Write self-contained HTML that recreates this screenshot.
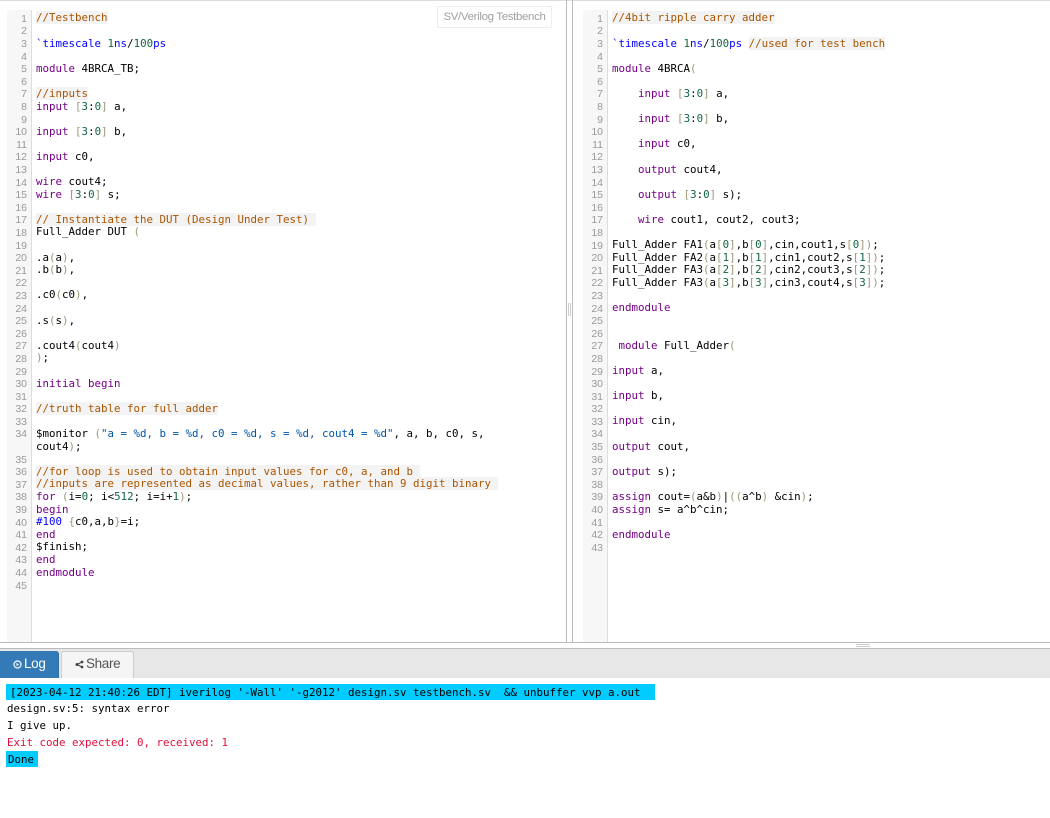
<!DOCTYPE html>
<html><head><meta charset="utf-8">
<style>
html,body{margin:0;padding:0;background:#fff;width:1050px;height:818px;overflow:hidden}
body{position:relative;font-family:"DejaVu Sans Mono","Liberation Mono",monospace;font-size:10.8px;color:#000}
.abs{position:absolute}
.gut{position:absolute;top:10px;width:24px;height:632px;background:#f7f7f7;border-right:1px solid #ddd}
.code{position:absolute;top:12.4px;line-height:12.6px}
.r{height:12.6px;position:relative;white-space:pre}
.r i{position:absolute;left:-36px;top:.5px;width:27px;text-align:right;font:10.5px/12.6px "Liberation Sans",sans-serif;color:#999}
.c{color:#a50;background:#f3f3f3}
.k{color:#708}
.n{color:#164}
.b{color:#997}
.m{color:#00f}
.s{color:#05a}
.log{position:absolute;left:7px;white-space:pre;line-height:17px}
</style></head>
<body>
<div class="abs" style="left:0;top:0;width:1050px;height:1px;background:#ddd"></div>
<div class="abs" style="left:566px;top:0;width:1px;height:642px;background:#bbb"></div>
<div class="abs" style="left:572px;top:0;width:1px;height:642px;background:#bbb"></div>
<div class="abs" style="left:568px;top:303px;width:1px;height:13px;background:#ccc"></div>
<div class="abs" style="left:570px;top:303px;width:1px;height:13px;background:#ccc"></div>
<div class="gut" style="left:7px"></div>
<div class="gut" style="left:583px"></div>

<div class="abs" style="left:437px;top:6px;width:113px;height:20px;border:1px solid #eee;font:11.4px/20px 'Liberation Sans',sans-serif;letter-spacing:-.3px;color:#a0a0a0;text-align:center">SV/Verilog Testbench</div>

<div class="code" style="left:36px">
<div class="r"><i>1</i><span class="c">//Testbench</span></div>
<div class="r"><i>2</i> </div>
<div class="r"><i>3</i><span class="m">`timescale</span> <span class="n">1</span><span class="m">ns</span>/<span class="n">100</span><span class="m">ps</span></div>
<div class="r"><i>4</i> </div>
<div class="r"><i>5</i><span class="k">module</span> 4BRCA_TB;</div>
<div class="r"><i>6</i> </div>
<div class="r"><i>7</i><span class="c">//inputs</span></div>
<div class="r"><i>8</i><span class="k">input</span> <span class="b">[</span><span class="n">3</span>:<span class="n">0</span><span class="b">]</span> a,</div>
<div class="r"><i>9</i> </div>
<div class="r"><i>10</i><span class="k">input</span> <span class="b">[</span><span class="n">3</span>:<span class="n">0</span><span class="b">]</span> b,</div>
<div class="r"><i>11</i> </div>
<div class="r"><i>12</i><span class="k">input</span> c0,</div>
<div class="r"><i>13</i> </div>
<div class="r"><i>14</i><span class="k">wire</span> cout4;</div>
<div class="r"><i>15</i><span class="k">wire</span> <span class="b">[</span><span class="n">3</span>:<span class="n">0</span><span class="b">]</span> s;</div>
<div class="r"><i>16</i> </div>
<div class="r"><i>17</i><span class="c">// Instantiate the DUT (Design Under Test) </span></div>
<div class="r"><i>18</i>Full_Adder DUT <span class="b">(</span></div>
<div class="r"><i>19</i> </div>
<div class="r"><i>20</i>.a<span class="b">(</span>a<span class="b">)</span>,</div>
<div class="r"><i>21</i>.b<span class="b">(</span>b<span class="b">)</span>,</div>
<div class="r"><i>22</i> </div>
<div class="r"><i>23</i>.c0<span class="b">(</span>c0<span class="b">)</span>,</div>
<div class="r"><i>24</i> </div>
<div class="r"><i>25</i>.s<span class="b">(</span>s<span class="b">)</span>,</div>
<div class="r"><i>26</i> </div>
<div class="r"><i>27</i>.cout4<span class="b">(</span>cout4<span class="b">)</span></div>
<div class="r"><i>28</i><span class="b">)</span>;</div>
<div class="r"><i>29</i> </div>
<div class="r"><i>30</i><span class="k">initial begin</span></div>
<div class="r"><i>31</i> </div>
<div class="r"><i>32</i><span class="c">//truth table for full adder</span></div>
<div class="r"><i>33</i> </div>
<div class="r"><i>34</i>$monitor <span class="b">(</span><span class="s">"a = %d, b = %d, c0 = %d, s = %d, cout4 = %d"</span>, a, b, c0, s,</div>
<div class="r">cout4<span class="b">)</span>;</div>
<div class="r"><i>35</i> </div>
<div class="r"><i>36</i><span class="c">//for loop is used to obtain input values for c0, a, and b </span></div>
<div class="r"><i>37</i><span class="c">//inputs are represented as decimal values, rather than 9 digit binary </span></div>
<div class="r"><i>38</i><span class="k">for</span> <span class="b">(</span>i=<span class="n">0</span>; i&lt;<span class="n">512</span>; i=i+<span class="n">1</span><span class="b">)</span>;</div>
<div class="r"><i>39</i><span class="k">begin</span></div>
<div class="r"><i>40</i><span class="m">#100</span> <span class="b">{</span>c0,a,b<span class="b">}</span>=i;</div>
<div class="r"><i>41</i><span class="k">end</span></div>
<div class="r"><i>42</i>$finish;</div>
<div class="r"><i>43</i><span class="k">end</span></div>
<div class="r"><i>44</i><span class="k">endmodule</span></div>
<div class="r"><i>45</i> </div>
</div>

<div class="code" style="left:612px">
<div class="r"><i>1</i><span class="c">//4bit ripple carry adder</span></div>
<div class="r"><i>2</i> </div>
<div class="r"><i>3</i><span class="m">`timescale</span> <span class="n">1</span><span class="m">ns</span>/<span class="n">100</span><span class="m">ps</span> <span class="c">//used for test bench</span></div>
<div class="r"><i>4</i> </div>
<div class="r"><i>5</i><span class="k">module</span> 4BRCA<span class="b">(</span></div>
<div class="r"><i>6</i> </div>
<div class="r"><i>7</i>    <span class="k">input</span> <span class="b">[</span><span class="n">3</span>:<span class="n">0</span><span class="b">]</span> a,</div>
<div class="r"><i>8</i> </div>
<div class="r"><i>9</i>    <span class="k">input</span> <span class="b">[</span><span class="n">3</span>:<span class="n">0</span><span class="b">]</span> b,</div>
<div class="r"><i>10</i> </div>
<div class="r"><i>11</i>    <span class="k">input</span> c0,</div>
<div class="r"><i>12</i> </div>
<div class="r"><i>13</i>    <span class="k">output</span> cout4,</div>
<div class="r"><i>14</i> </div>
<div class="r"><i>15</i>    <span class="k">output</span> <span class="b">[</span><span class="n">3</span>:<span class="n">0</span><span class="b">]</span> s);</div>
<div class="r"><i>16</i> </div>
<div class="r"><i>17</i>    <span class="k">wire</span> cout1, cout2, cout3;</div>
<div class="r"><i>18</i> </div>
<div class="r"><i>19</i>Full_Adder FA1<span class="b">(</span>a<span class="b">[</span><span class="n">0</span><span class="b">]</span>,b<span class="b">[</span><span class="n">0</span><span class="b">]</span>,cin,cout1,s<span class="b">[</span><span class="n">0</span><span class="b">])</span>;</div>
<div class="r"><i>20</i>Full_Adder FA2<span class="b">(</span>a<span class="b">[</span><span class="n">1</span><span class="b">]</span>,b<span class="b">[</span><span class="n">1</span><span class="b">]</span>,cin1,cout2,s<span class="b">[</span><span class="n">1</span><span class="b">])</span>;</div>
<div class="r"><i>21</i>Full_Adder FA3<span class="b">(</span>a<span class="b">[</span><span class="n">2</span><span class="b">]</span>,b<span class="b">[</span><span class="n">2</span><span class="b">]</span>,cin2,cout3,s<span class="b">[</span><span class="n">2</span><span class="b">])</span>;</div>
<div class="r"><i>22</i>Full_Adder FA3<span class="b">(</span>a<span class="b">[</span><span class="n">3</span><span class="b">]</span>,b<span class="b">[</span><span class="n">3</span><span class="b">]</span>,cin3,cout4,s<span class="b">[</span><span class="n">3</span><span class="b">])</span>;</div>
<div class="r"><i>23</i> </div>
<div class="r"><i>24</i><span class="k">endmodule</span></div>
<div class="r"><i>25</i> </div>
<div class="r"><i>26</i> </div>
<div class="r"><i>27</i> <span class="k">module</span> Full_Adder<span class="b">(</span></div>
<div class="r"><i>28</i> </div>
<div class="r"><i>29</i><span class="k">input</span> a,</div>
<div class="r"><i>30</i> </div>
<div class="r"><i>31</i><span class="k">input</span> b,</div>
<div class="r"><i>32</i> </div>
<div class="r"><i>33</i><span class="k">input</span> cin,</div>
<div class="r"><i>34</i> </div>
<div class="r"><i>35</i><span class="k">output</span> cout,</div>
<div class="r"><i>36</i> </div>
<div class="r"><i>37</i><span class="k">output</span> s);</div>
<div class="r"><i>38</i> </div>
<div class="r"><i>39</i><span class="k">assign</span> cout=<span class="b">(</span>a&amp;b<span class="b">)</span>|<span class="b">((</span>a^b<span class="b">)</span> &amp;cin<span class="b">)</span>;</div>
<div class="r"><i>40</i><span class="k">assign</span> s= a^b^cin;</div>
<div class="r"><i>41</i> </div>
<div class="r"><i>42</i><span class="k">endmodule</span></div>
<div class="r"><i>43</i> </div>
</div>

<div class="abs" style="left:0;top:642px;width:1050px;height:1px;background:#bbb"></div>
<div class="abs" style="left:856px;top:644px;width:14px;height:1px;background:#ccc"></div>
<div class="abs" style="left:856px;top:646px;width:14px;height:1px;background:#ccc"></div>
<div class="abs" style="left:0;top:648px;width:1050px;height:30px;background:#e7e7e7;border-top:1px solid #bbb;box-sizing:border-box"></div>

<div class="abs" style="left:0;top:651px;width:59px;height:27px;background:#337ab7;border-radius:0 3px 0 0;border-right:1px solid #2e6da4;box-sizing:border-box"></div>
<svg class="abs" style="left:13px;top:660px" width="9" height="9" viewBox="0 0 9 9"><circle cx="4.5" cy="4.5" r="3.5" fill="none" stroke="#dfe9f3" stroke-width="1.4"/><path d="M3.4 2.8L6.2 4.5L3.4 6.2Z" fill="#dfe9f3"/></svg>
<div class="abs" style="left:24px;top:654px;font:13.5px/20px 'Liberation Sans',sans-serif;letter-spacing:-.35px;color:#fff">Log</div>

<div class="abs" style="left:61px;top:651px;width:73px;height:27px;background:#f5f5f5;border:1px solid #ccc;border-bottom:0;border-radius:3px 3px 0 0;box-sizing:border-box"></div>
<svg class="abs" style="left:75px;top:660px" width="9" height="9" viewBox="0 0 9 9"><path d="M7 2L2 4.5L7 7" stroke="#444" stroke-width="1" fill="none"/><circle cx="2" cy="4.5" r="1.5" fill="#444"/><circle cx="7" cy="2" r="1.4" fill="#444"/><circle cx="7" cy="7" r="1.4" fill="#444"/></svg>
<div class="abs" style="left:86px;top:654px;font:13.5px/20px 'Liberation Sans',sans-serif;letter-spacing:-.35px;color:#555">Share</div>

<div class="abs" style="left:6px;top:684px;width:649px;height:16px;background:#0cf"></div>
<div class="log" style="left:10px;top:684px">[2023-04-12 21:40:26 EDT] iverilog '-Wall' '-g2012' design.sv testbench.sv  &amp;&amp; unbuffer vvp a.out</div>
<div class="log" style="top:700px">design.sv:5: syntax error</div>
<div class="log" style="top:717px">I give up.</div>
<div class="log" style="top:734px;color:#e0103c">Exit code expected: 0, received: 1</div>
<div class="abs" style="left:6px;top:751px;width:32px;height:16px;background:#0cf"></div>
<div class="log" style="left:8px;top:751px">Done</div>
</body></html>
